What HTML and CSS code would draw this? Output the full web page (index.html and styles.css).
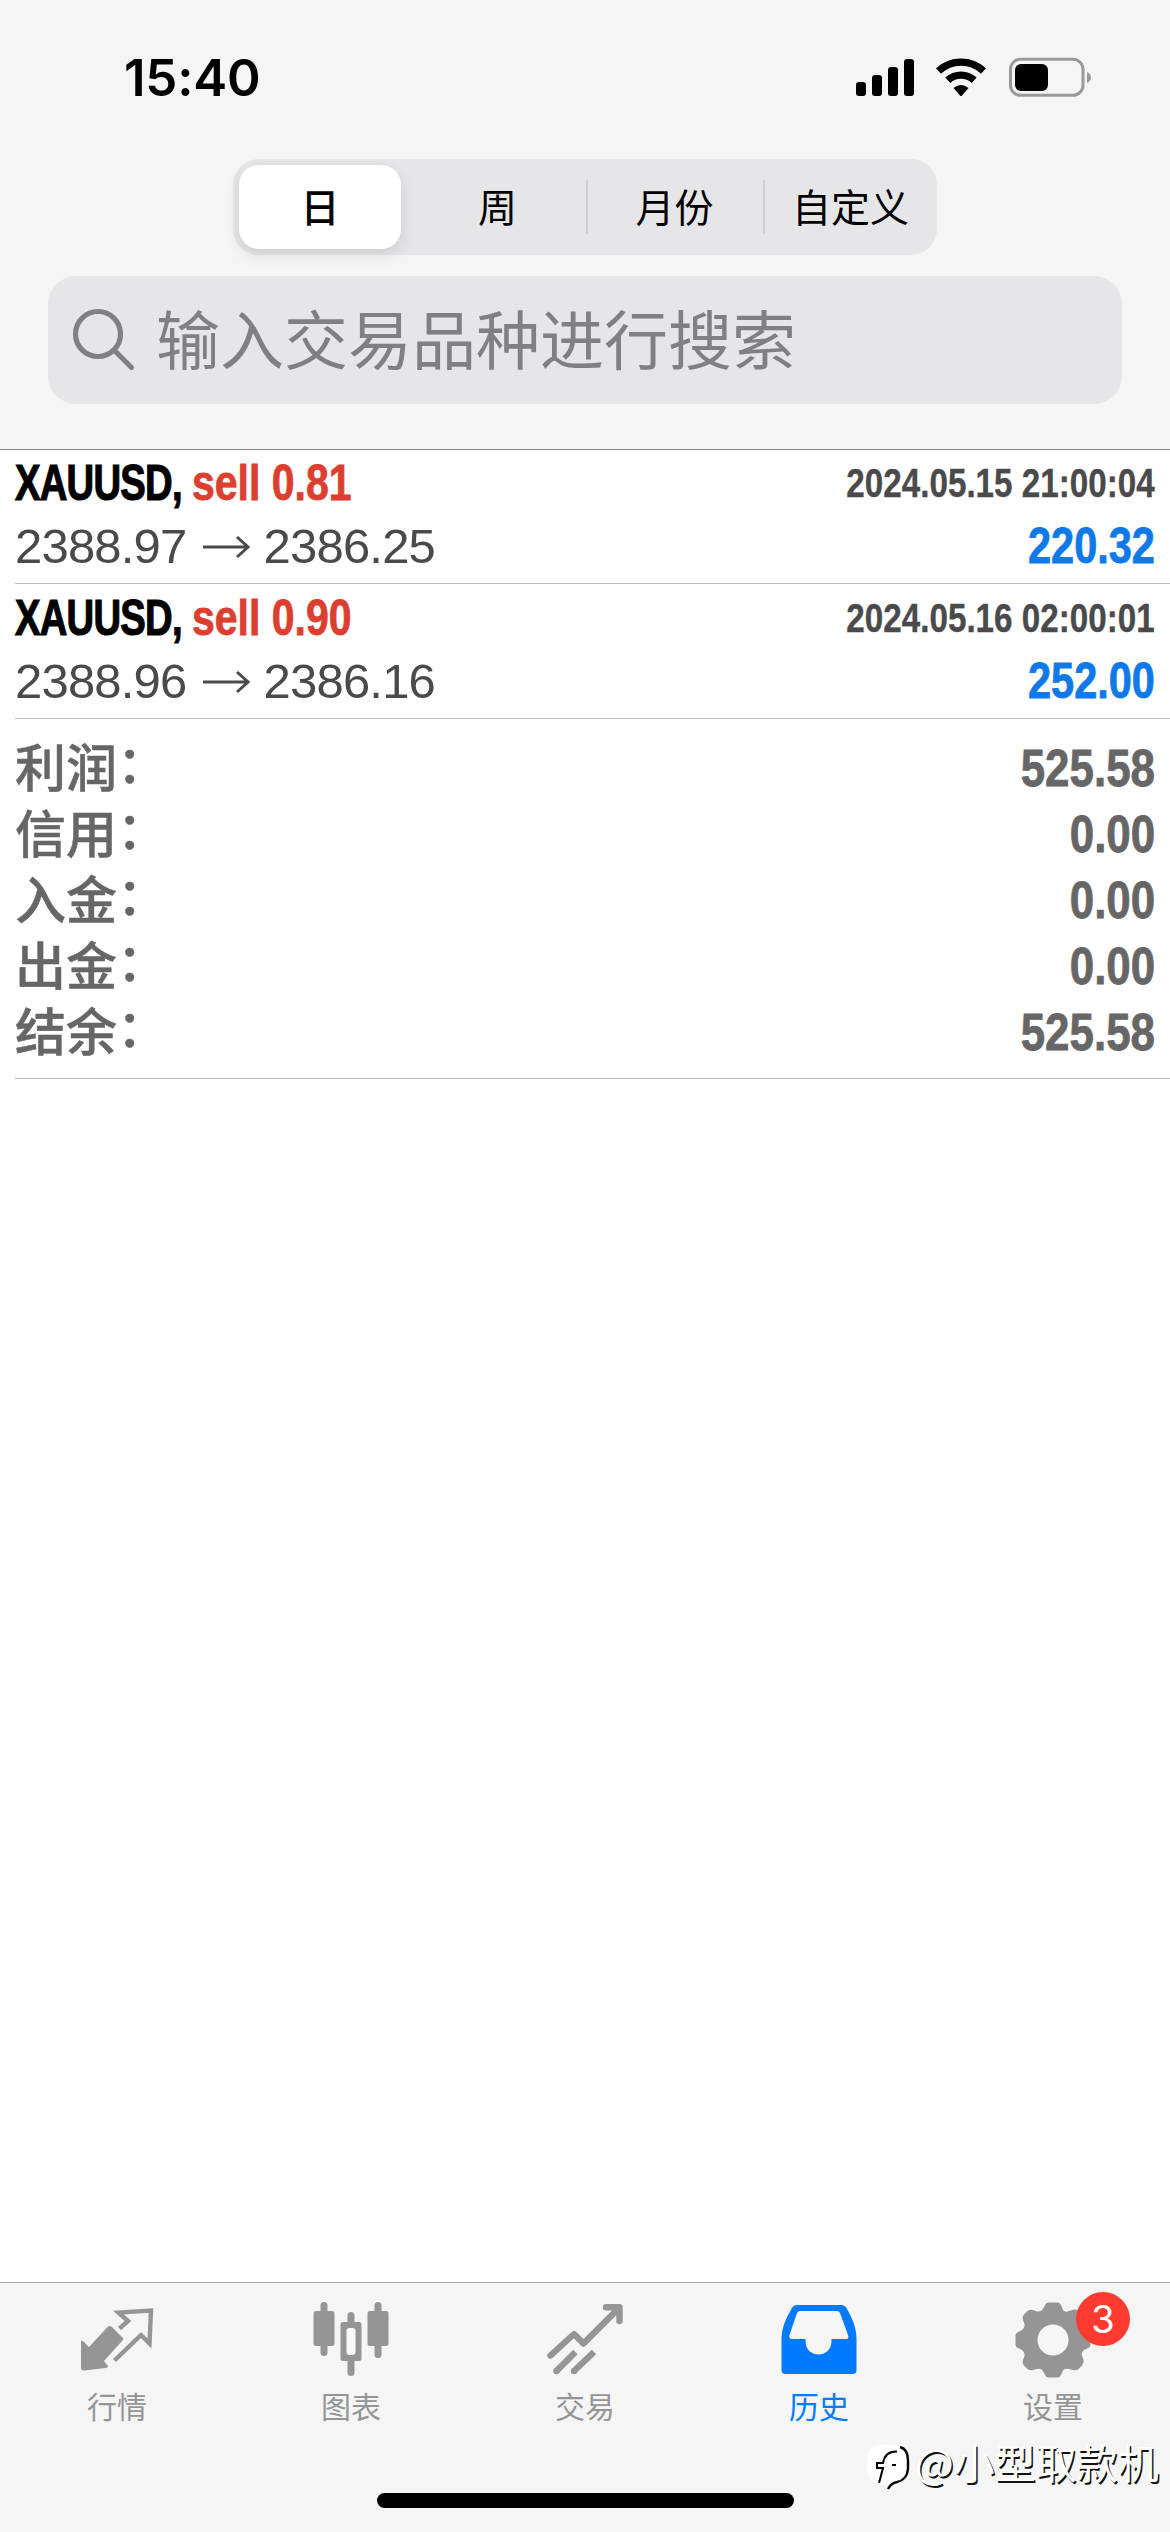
FILE: index.html
```html
<!DOCTYPE html>
<html lang="zh-CN">
<head>
<meta charset="utf-8">
<title>历史</title>
<link rel="stylesheet" href="styles.css">
</head>
<body>
<div class="screen">
  <header class="header">
    <div class="status">
      <span class="clock">15:40</span>
      <svg class="status-icons" width="240" height="44" viewBox="0 0 240 44">
        <g><rect x="4" y="26" width="10" height="14" rx="3"/><rect x="20" y="19" width="10" height="21" rx="3"/><rect x="36" y="11" width="10" height="29" rx="3"/><rect x="52" y="3" width="10" height="37" rx="3"/></g>
        <g fill="none" stroke="#000" stroke-width="7.400"><path d="M86.500 15A33 33 0 0 1 131.500 15"/><path d="M95.800 24.300A19.500 19.500 0 0 1 122.200 24.300"/></g>
        <path d="M101.500 32Q109 26 116.500 32L110 39.500Q109 40.500 108 39.500Z"/>
        <rect x="158.500" y="3.300" width="72.500" height="36" rx="10" fill="none" stroke="#999" stroke-width="3"/>
        <rect x="163" y="8" width="33" height="27" rx="6"/>
        <path d="M235 16Q239 18 239 21.500T235 27Z" fill="#999"/>
      </svg>
    </div>
    <div class="segments">
      <div class="segment selected">日</div>
      <div class="segment">周</div>
      <div class="segment divided">月份</div>
      <div class="segment divided">自定义</div>
    </div>
    <div class="search">
      <svg width="64" height="64" viewBox="0 0 64 64" fill="none" stroke="#808084" stroke-width="5.200" stroke-linecap="round"><circle cx="26" cy="26" r="22.500"/><path d="M42.500 42.500L59.500 59.500"/></svg>
      <span class="placeholder">输入交易品种进行搜索</span>
    </div>
  </header>

  <main class="content">
    <section class="deal">
      <div class="line"><span class="title"><span class="symbol">XAUUSD,</span><span class="side">sell 0.81</span></span><span class="date">2024.05.15 21:00:04</span></div>
      <div class="line"><span class="prices">2388.97<svg class="arrow" width="48" height="26" viewBox="0 0 48 26"><path d="M1 13H45M35 3L46 13L35 23"/></svg>2386.25</span><span class="profit">220.32</span></div>
    </section>
    <section class="deal">
      <div class="line"><span class="title"><span class="symbol">XAUUSD,</span><span class="side">sell 0.90</span></span><span class="date">2024.05.16 02:00:01</span></div>
      <div class="line"><span class="prices">2388.96<svg class="arrow" width="48" height="26" viewBox="0 0 48 26"><path d="M1 13H45M35 3L46 13L35 23"/></svg>2386.16</span><span class="profit">252.00</span></div>
    </section>
    <section class="summary">
      <div class="total"><span class="label">利润<span class="colon">：</span></span><span class="amount">525.58</span></div>
      <div class="total"><span class="label">信用<span class="colon">：</span></span><span class="amount">0.00</span></div>
      <div class="total"><span class="label">入金<span class="colon">：</span></span><span class="amount">0.00</span></div>
      <div class="total"><span class="label">出金<span class="colon">：</span></span><span class="amount">0.00</span></div>
      <div class="total"><span class="label">结余<span class="colon">：</span></span><span class="amount">525.58</span></div>
    </section>
  </main>

  <footer class="footer">
    <nav class="tabs">
      <div class="tab">
        <svg width="76" height="76" viewBox="0 0 76 76"><path fill="currentColor" d="M2 39Q3 38 5 40L10 45L28.500 25Q30.500 23 33 25L43.500 35.500Q45 37 43.500 38.500L25 59L29 64Q29 65.500 27 66L5 68.500Q2 69 2 66Z"/><path d="M40.500 26.500L49 19L39.500 10.500L72 8.500L70.500 41.500L62 33L35.500 58.500" fill="none" stroke="currentColor" stroke-width="4.400"/></svg>
        <span>行情</span>
      </div>
      <div class="tab">
        <svg width="76" height="76" viewBox="0 0 76 76" fill="currentColor"><rect x="7.500" y="0" width="7" height="54" rx="3.500"/><rect x=".5" y="9" width="21" height="35" rx="2.500"/><rect x="61.500" y="0" width="7" height="56" rx="3.500"/><rect x="54.500" y="9" width="21" height="35" rx="2.500"/><path d="M34.500 20V13.500a3.500 3.500 0 0 1 7 0V20H46a2.500 2.500 0 0 1 2.500 2.500V56.500A2.500 2.500 0 0 1 46 59H41.500V70.500a3.500 3.500 0 0 1-7 0V59H30a2.500 2.500 0 0 1-2.500-2.500V22.500A2.500 2.500 0 0 1 30 20Z"/><rect x="33.500" y="26" width="9" height="27" rx="3" fill="#f9f9f9"/></svg>
        <span>图表</span>
      </div>
      <div class="tab">
        <svg width="76" height="76" viewBox="0 0 76 76" fill="none" stroke="currentColor" stroke-width="6.400" stroke-linecap="round" stroke-linejoin="round"><path d="M3.500 53.500L27 32L36.500 41.500L72 6M59 5.200H72.500V19"/><path d="M9.500 69L28.500 50M27 69L47 50" stroke-linecap="butt"/><path d="M9.500 69h.01M27 69h.01"/></svg>
        <span>交易</span>
      </div>
      <div class="tab active">
        <svg width="76" height="76" viewBox="0 0 76 76"><path fill="currentColor" fill-rule="evenodd" d="M16 3H60Q63.500 3 65.500 6Q75.500 23 75.500 36V68Q75.500 72 71.500 72H4.500Q.5 72 .5 68V36Q.5 23 11 6Q12.500 3 16 3ZM19 9Q17 9 16 11L8.500 33Q7.500 37 11 37H24.500V39C24.500 57 50.500 57 50.500 39V37H65Q68.500 37 67 33L59 11Q58 9 56 9Z"/></svg>
        <span>历史</span>
      </div>
      <div class="tab">
        <div class="icon-wrap">
          <svg width="76" height="76" viewBox="0 0 76 76"><path fill="currentColor" fill-rule="evenodd" d="M33 .5H43Q45 .5 46.500 4L48 8Q50 11 54 9L59 7.500Q62 7 64 9L67.500 12.500Q69 14.500 68 18L66.500 22Q66 26 69 28L73 30Q75.500 31 75.500 33.500V42.500Q75.500 45 73 46L69 48Q66 50 67 53.500L68.500 58Q69 61 67 63.500L63.500 67Q61 69 58 68L54 67Q50 66 48 68.500L46 73Q45 75.500 42.500 75.500H33.500Q31 75.500 30 73L28 69Q26 66 22 67L18 68Q15 69 12.500 67L9 63.500Q7 61 8 58L9.500 54Q10 50 7 48L3 46Q.5 45 .5 42.500V33.500Q.5 31 3 30L7 28Q10 26 9.500 22L8 18Q7 15 9 12.500L12.500 9Q15 7 18 8L22 9.500Q26 10 28 7L30 3Q31 .5 33 .5ZM38 22.500A15.500 15.500 0 1 0 38 53.500A15.500 15.500 0 1 0 38 22.500Z"/></svg>
          <span class="badge">3</span>
        </div>
        <span>设置</span>
      </div>
    </nav>
    <div class="home-indicator"></div>
    <div class="watermark">
      <svg width="46" height="48" viewBox="0 0 46 48"><rect x="0" y="3" width="40" height="39" rx="14" fill="#fff"/><path d="M33 5Q41 7 41 19V27Q40 38 30 40Q24 41 21 47" fill="none" stroke="#000" stroke-width="2.400"/><path d="M9 26H16L12 41M10 26V21H16Q18 9 30 9.500M25 23H29" fill="none" stroke="#000" stroke-width="2"/></svg>
      <span class="handle">@小型取款机</span>
    </div>
  </footer>
</div>
</body>
</html>
```

FILE: styles.css
```css
* { box-sizing: border-box; }

body {
  margin: 0;
  background: #fff;
  font-family: "Liberation Sans", "Noto Sans CJK SC", sans-serif;
}

.screen {
  width: 1170px;
  height: 2532px;
  display: flex;
  flex-direction: column;
  overflow: hidden;
}

.header {
  height: 450px;
  flex: none;
  display: flex;
  flex-direction: column;
  align-items: center;
  background: #f5f5f5;
  border-bottom: 1px solid #8c8c8f;
}

.status {
  width: 100%;
  height: 159px;
  padding: 56px 78px 0 124px;
  display: flex;
  justify-content: space-between;
}

.clock {
  font: 600 51px/44px Inter, sans-serif;
  letter-spacing: -0.2px;
}

.segments {
  width: 704px;
  height: 96px;
  padding: 6px 0;
  display: flex;
  background: #e6e6e8;
  border-radius: 26px;
}

.segment {
  flex: 0 0 177px;
  font: 400 39px/80px "Noto Sans CJK SC", sans-serif;
  text-align: center;
  color: #000;
}

.selected {
  flex-basis: 162px;
  margin: 0 8px 0 6px;
  background: #fff;
  border-radius: 20px;
  box-shadow: 0 6px 16px rgba(0, 0, 0, 0.11);
  font-weight: 500;
}

.divided {
  background: linear-gradient(#cfcfd2, #cfcfd2) 0 50% / 2px 54px no-repeat;
}

.segment:last-child { flex-basis: 175px; }

.search {
  width: 1074px;
  height: 128px;
  margin-top: 21px;
  padding: 0 24px;
  display: flex;
  align-items: center;
  gap: 20px;
  background: #e6e6e8;
  border-radius: 28px;
  color: #808084;
}

.placeholder {
  padding-bottom: 9px;
  font: 400 64px/118px "Noto Sans CJK SC", sans-serif;
}

.content { flex: 1; padding-left: 15px; }

.deal {
  height: 135px;
  padding: 3px 15px 0 0;
  border-bottom: 1px solid #bcbcbe;
}

.deal:first-child { height: 134px; padding-top: 2px; }

.line {
  height: 63px;
  display: flex;
  justify-content: space-between;
  line-height: 63px;
  white-space: nowrap;
}

.title {
  display: flex;
  font-size: 50px;
  font-weight: 700;
}

.symbol {
  width: 177px;
  letter-spacing: -1px;
  transform: scaleX(0.765);
  transform-origin: left;
  -webkit-text-stroke: 1.2px currentColor;
}

.side {
  color: #dc3e2f;
  transform: scaleX(0.82);
  transform-origin: left;
  -webkit-text-stroke: 0.8px currentColor;
}

.date {
  font-size: 41px;
  font-weight: 700;
  color: #4a4a4d;
  transform: scaleX(0.81);
  transform-origin: right;
  -webkit-text-stroke: 0.4px currentColor;
}

.prices {
  display: flex;
  align-items: center;
  font-size: 49px;
  letter-spacing: -0.8px;
  color: #4a4a4d;
}

.arrow {
  margin: 0 14px 0 15px;
  fill: none;
  stroke: #4a4a4d;
  stroke-width: 3;
}

.profit {
  font-size: 50px;
  font-weight: 700;
  color: #0f79e8;
  transform: scaleX(0.83);
  transform-origin: right;
  -webkit-text-stroke: 0.8px currentColor;
}

.summary {
  height: 360px;
  padding: 16px 15px 0 0;
  border-bottom: 1px solid #b4b4b6;
}

.total {
  height: 66px;
  display: flex;
  justify-content: space-between;
  font: 500 51px/60px "Noto Sans CJK SC", sans-serif;
  color: #666;
}

.label { -webkit-text-stroke: 0.5px currentColor; }

.colon {
  line-height: 1;
  vertical-align: 4px;
}

.amount {
  font-family: "Liberation Sans", sans-serif;
  font-size: 52px;
  line-height: 67px;
  font-weight: 700;
  transform: scaleX(0.845);
  transform-origin: right;
  -webkit-text-stroke: 0.8px currentColor;
}

.footer {
  position: relative;
  height: 250px;
  flex: none;
  background: #f5f5f5;
  border-top: 1px solid #a9a9ab;
}

.tabs { height: 210px; display: flex; }

.tab {
  flex: 1;
  padding-top: 19px;
  display: flex;
  flex-direction: column;
  align-items: center;
  gap: 5px;
  font: 400 30px/44px "Noto Sans CJK SC", sans-serif;
  color: #959595;
}

.tab svg { display: block; }

.tab.active { color: #007aff; }

.icon-wrap { position: relative; }

.badge {
  position: absolute;
  left: 61px;
  top: -10px;
  width: 54px;
  height: 54px;
  border-radius: 50%;
  background: #ff3b30;
  color: #fff;
  font: 400 38px/54px Inter, sans-serif;
  text-align: center;
}

.home-indicator {
  width: 417px;
  height: 15px;
  margin: 0 auto;
  border-radius: 8px;
  background: #000;
}

.watermark {
  position: absolute;
  left: 867px;
  top: 159px;
  display: flex;
  gap: 2px;
}

.handle {
  font: 400 41px/38px "Noto Sans CJK SC", sans-serif;
  color: #fff;
  text-shadow: 1.5px 1.5px 0 #111;
}
```
